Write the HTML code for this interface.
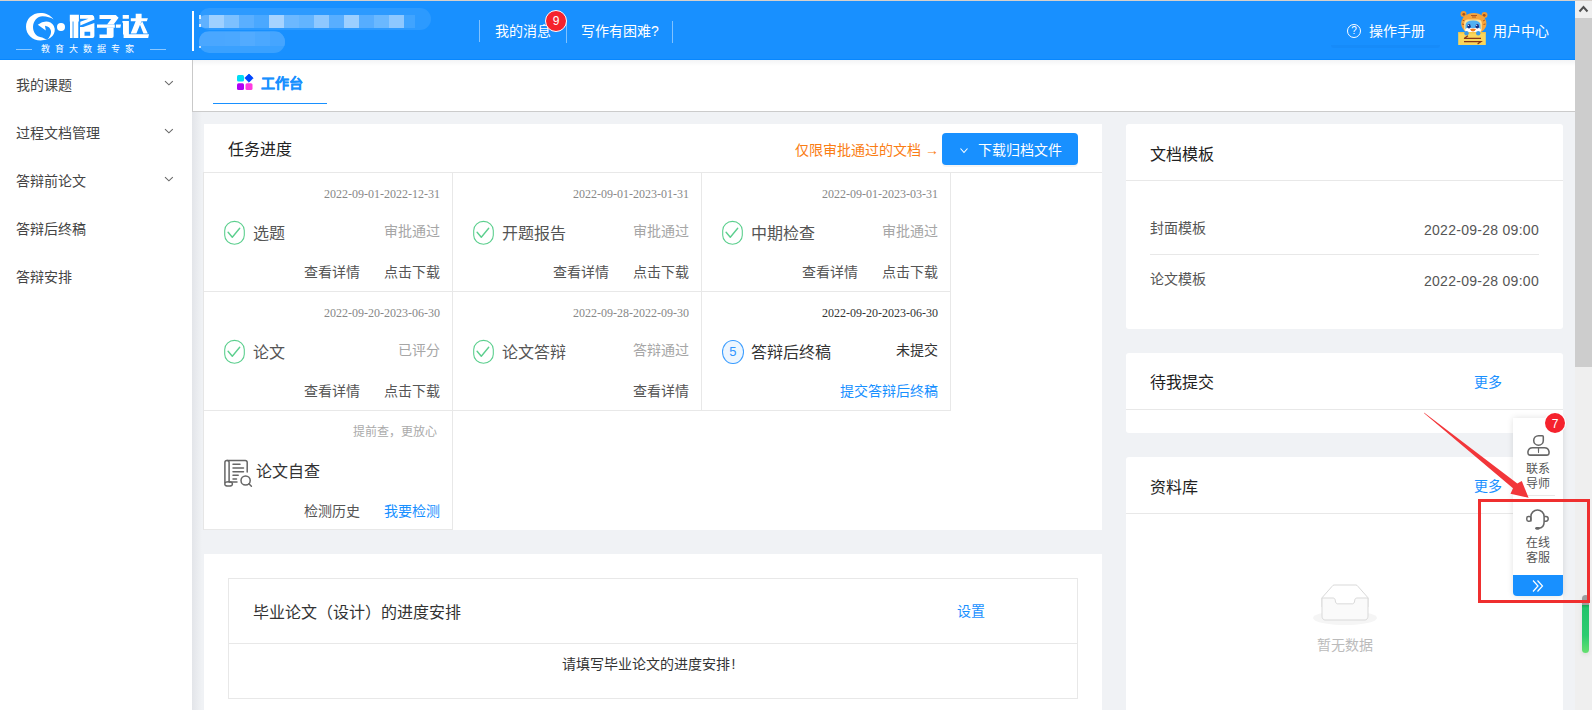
<!DOCTYPE html>
<html lang="zh-CN"><head><meta charset="utf-8">
<style>
*{box-sizing:border-box;margin:0;padding:0}
html,body{width:1592px;height:710px;overflow:hidden}
body{position:relative;background:#f0f2f5;font-family:"Liberation Sans",sans-serif;font-size:14px;color:#333}
.a{position:absolute;white-space:nowrap}
#topline{left:0;top:0;width:1592px;height:1px;background:#d6d0cb;z-index:5}
#hdr{left:0;top:1px;width:1575px;height:59px;background:#1890ff}
#hdrline{left:0;top:59px;width:1575px;height:1px;background:#0787ff}
.wt{color:#fff;font-size:14px;line-height:16px}
.sep{width:1px;height:22px;background:rgba(255,255,255,.45)}
#sb{left:1575px;top:0;width:17px;height:710px;background:#efefef}
#side{left:0;top:60px;width:192px;height:650px;background:#fff}
.mi{left:16px;font-size:14px;line-height:16px;color:#444}
.chev{left:165px;width:8px;height:5px}
#tabbar{left:192px;top:60px;width:1383px;height:52px;background:#fff;border-bottom:1px solid #cbcbcb;border-left:1px solid #c9c9c9}
.card{background:#fff}
.cell{width:249px;height:119px;border-right:1px solid #e8e8e8;border-bottom:1px solid #e8e8e8}
.date{font-family:"Liberation Serif",serif;font-size:12px;color:#888;line-height:14px;right:12px;top:14px}
.nm{font-size:16px;line-height:18px;color:#555;left:49px;top:52px}
.st{font-size:14px;line-height:16px;color:#a6a6a6;right:12px;top:51px}
.ln{font-size:14px;line-height:16px;color:#555;top:92px}
.blue{color:#1890ff}
</style></head><body>
<div class="a" id="topline"></div>
<div class="a" id="hdr"></div>
<div class="a" id="hdrline"></div>


<!-- header content -->
<svg class="a" style="left:20px;top:8px" width="50" height="37" viewBox="20 8 50 37">
 <path fill="#fff" d="M53.6 19.4 C50 14.8 45.5 13 40.5 13 C32 13 26 19.3 26 26.7 C26 34.5 32.5 40.4 40.5 40.4 C43 40.4 45.2 40.1 47.2 39.6 C44.5 38.6 42.6 37.4 41 37.2 C36.5 36.8 33 32.5 33 27 C33 21 37.5 16.3 42.5 16.3 C47 16.3 50.8 17.6 53.6 19.4 Z"/>
 <path fill="#fff" d="M37.8 24.7 Q44.5 19.8 50.5 22.5 Q55.5 25.5 54.6 31.5 Q53.5 37 47.2 39.6 Q51.5 35.5 51 31 Q50.3 26.8 45 25.7 L45.8 30.6 Z"/>
</svg>
<div class="a" style="left:57.3px;top:23.4px;width:7.8px;height:7.8px;border-radius:50%;background:#fff"></div>
<svg class="a" style="left:65px;top:8px" width="90" height="37" viewBox="65 8 90 37" fill="#fff">
 <path d="M69.8 14.8 H78.9 V21.6 H69.8 Z M70 21.6 H72.6 V38 H70 Z M73.5 21.6 H78.3 V38 H73.5 Z"/>
 <path d="M80 15 H92.5 Q94.4 15.5 94.4 18.5 V19.5 L80.3 25.5 V21.8 L88.5 18.7 H80 Z"/>
 <path d="M94.4 23 V27.2 H82.5 Z"/>
 <path d="M80 27.1 H94.4 V36 Q94.4 38 92.4 38 H80 Z M84.5 31.8 V35.8 H90.2 V31.8 Z" fill-rule="evenodd"/>
 <path d="M99.5 15.1 H115.8 L118.6 17.8 L113.6 24.4 H107 L111.3 19 H99.5 Z"/>
 <path d="M97 24.4 H114.8 V27.8 H97 Z M115.9 24.4 H121 L120.4 27.8 H115.9 Z"/>
 <path d="M106.8 27.8 H113.6 V36.2 Q113.6 38 111.8 38 H99.5 V34.6 H106.8 Z"/>
 <path d="M122.7 15.1 H128.9 V18.8 H122.7 Z M122.4 21 H128.9 V34.4 H123 V22.8 H122.4 Z M123.6 34.2 H149 L148.2 38 H123.6 Z"/>
 <path d="M135.7 13.8 H141.6 V18.2 H147.9 L146.8 21.2 H130.8 V18.2 H135.7 Z"/>
 <path d="M135.7 21 H141.6 L136.4 33.5 H130.7 Z M140 24.8 L142.2 21.2 L147.8 33.5 H143.4 Z"/>
</svg>
<div class="a" style="left:16px;top:49px;width:16px;height:1px;background:rgba(255,255,255,.5)"></div>
<div class="a" style="left:150px;top:49px;width:16px;height:1px;background:rgba(255,255,255,.5)"></div>
<div class="a" style="left:41px;top:44px;font-size:9px;line-height:10px;color:#fff;letter-spacing:5px">教育大数据专家</div>
<div class="a" style="left:192px;top:11px;width:2px;height:40px;background:#fff"></div>
<!-- blurred user text -->
<div class="a" style="left:197px;top:6px;width:236px;height:49px;filter:blur(0.7px)">
 <div class="a" style="left:2px;top:2px;width:232px;height:22px;border-radius:11px 12px 12px 11px;background:#2c9aff"></div>
 <div class="a" style="left:2px;top:9px;width:216px;height:13px;display:flex">
  <div style="width:10px;background:#5fb1ff;border-radius:6px 0 0 6px"></div>
  <div style="width:15px;background:#9ed0ff"></div><div style="width:15px;background:#7cc0ff"></div><div style="width:15px;background:#5aafff"></div><div style="width:15px;background:#4aa8ff"></div><div style="width:15px;background:#a6d3ff"></div><div style="width:15px;background:#6cb8ff"></div><div style="width:15px;background:#62b4ff"></div><div style="width:15px;background:#8ec8ff"></div><div style="width:15px;background:#58aeff"></div><div style="width:15px;background:#9ccfff"></div><div style="width:15px;background:#56adff"></div><div style="width:15px;background:#6ab8ff"></div><div style="width:15px;background:#8ec8ff"></div><div style="width:11px;background:#40a4ff"></div>
 </div>
 <div class="a" style="left:2px;top:25px;width:86px;height:22px;border-radius:11px 12px 12px 11px;background:#3aa1ff;overflow:hidden">
  <div class="a" style="left:0;top:1px;width:86px;height:14px;display:flex"><div style="width:26px;background:#4aa7ff"></div><div style="width:15px;background:#4ba8ff"></div><div style="width:15px;background:#52abff"></div><div style="width:15px;background:#4ba8ff"></div><div style="width:15px;background:#45a5ff"></div></div>
 </div>
</div>
<div class="a" style="left:199px;top:15px;width:2px;height:4px;background:#fff;opacity:.8"></div>
<div class="a" style="left:199px;top:24px;width:2px;height:3px;background:#fff;opacity:.8"></div>
<div class="a" style="left:199px;top:46px;width:2px;height:2px;background:#fff;opacity:.7"></div>
<div class="a sep" style="left:479px;top:20px"></div>
<div class="a sep" style="left:566px;top:21px"></div>
<div class="a sep" style="left:672px;top:21px"></div>
<div class="a wt" style="left:495px;top:23px">我的消息</div>
<div class="a" style="left:545px;top:10px;width:22px;height:22px;border-radius:50%;background:#f5222d;border:1px solid #fff;color:#fff;font-size:12px;line-height:20px;text-align:center">9</div>
<div class="a wt" style="left:581px;top:23px">写作有困难?</div>
<div class="a" style="left:1331px;top:45px;width:109px;height:3px;border-radius:0 0 6px 6px;background:rgba(0,60,140,.05)"></div>
<div class="a" style="left:1347px;top:24px;width:14px;height:14px;border-radius:50%;border:1px solid #fff;color:#fff;font-size:10px;line-height:12px;text-align:center">?</div>
<div class="a wt" style="left:1369px;top:23px">操作手册</div>
<!-- tiger avatar -->
<svg class="a" style="left:1452px;top:8px" width="40" height="40" viewBox="0 0 40 40">
 <circle cx="11.5" cy="6" r="3" fill="#f29a30"/><circle cx="11.8" cy="6.3" r="1.4" fill="#a3521c"/>
 <circle cx="32.5" cy="7" r="3" fill="#f29a30"/><circle cx="32.2" cy="7.3" r="1.4" fill="#a3521c"/>
 <ellipse cx="21.8" cy="15.5" rx="12.6" ry="10.5" fill="#f5a53c"/>
 <path d="M19 7.5 h6 M20 9 h4 M10.5 12 l2 1 M33 12 l-2 1 M10 16 l2 .5 M33.5 16 l-2 .5" stroke="#b3581d" stroke-width="1"/>
 <rect x="12.2" y="11.5" width="17.6" height="13" rx="4" fill="#ffe39a"/>
 <path d="M13.5 17 Q13.5 12.5 21 12.5 Q28.5 12.5 28.5 17 V21 H13.5 Z" fill="#52b0f2"/>
 <rect x="13.5" y="20" width="15" height="4" rx="1.5" fill="#fff"/>
 <ellipse cx="17" cy="18.3" rx="1.7" ry="2.2" fill="#1b2f80"/><ellipse cx="25.3" cy="18.3" rx="1.7" ry="2.2" fill="#1b2f80"/>
 <circle cx="16.4" cy="17.3" r=".6" fill="#fff"/><circle cx="24.7" cy="17.3" r=".6" fill="#fff"/>
 <path d="M18 21 Q21 20 24 21 Q23 23.5 21 23.5 Q19 23.5 18 21 Z" fill="#f47a1c"/>
 <rect x="6.2" y="24.2" width="27.6" height="12.8" fill="#fbd65a"/>
 <rect x="6.2" y="24.2" width="27.6" height="1.2" fill="#f3c445"/>
 <circle cx="14.5" cy="25.2" r="2.2" fill="#3d9be8"/><circle cx="26.2" cy="25.2" r="2.2" fill="#3d9be8"/>
 <path d="M12 30.4 H29 M12 30.4 L16 27.8 M12 33.6 H29 L25.6 36" stroke="#8a3616" stroke-width="1.2" fill="none"/>
</svg>
<div class="a wt" style="left:1493px;top:23px">用户中心</div>

<!-- sidebar -->
<div class="a" id="side"></div>
<div class="a mi" style="top:77px">我的课题</div>
<div class="a mi" style="top:125px">过程文档管理</div>
<div class="a mi" style="top:173px">答辩前论文</div>
<div class="a mi" style="top:221px">答辩后终稿</div>
<div class="a mi" style="top:269px">答辩安排</div>

<svg class="a" style="left:164px;top:80px" width="10" height="7" viewBox="0 0 10 7"><path d="M1 1.2 L4.9 4.9 L8.8 1.2" stroke="#666" stroke-width="1.05" fill="none"/></svg>
<svg class="a" style="left:164px;top:128px" width="10" height="7" viewBox="0 0 10 7"><path d="M1 1.2 L4.9 4.9 L8.8 1.2" stroke="#666" stroke-width="1.05" fill="none"/></svg>
<svg class="a" style="left:164px;top:176px" width="10" height="7" viewBox="0 0 10 7"><path d="M1 1.2 L4.9 4.9 L8.8 1.2" stroke="#666" stroke-width="1.05" fill="none"/></svg>
<!-- tab bar -->
<div class="a" id="tabbar"></div>
<div class="a" style="left:193px;top:60px;width:1382px;height:6px;background:linear-gradient(#f3f4f6,#fff)"></div>
<svg class="a" style="left:236px;top:73px" width="18" height="18" viewBox="0 0 18 18">
 <rect x="1" y="2" width="7" height="6.5" rx="1.5" fill="#00dcf5"/>
 <path d="M13 1 L17.2 5 L13 9.2 L8.8 5 Z" fill="#0047ff" stroke="#0047ff" stroke-width="0.8" stroke-linejoin="round"/>
 <rect x="1" y="10.2" width="7" height="6.8" rx="1.5" fill="#b000f5"/>
 <rect x="9.5" y="10.2" width="7" height="6.8" rx="1.5" fill="#ff3ae0"/>
</svg>
<div class="a" style="left:261px;top:75px;font-size:14px;line-height:16px;font-weight:bold;color:#1890ff;-webkit-text-stroke:0.25px #1890ff">工作台</div>
<div class="a" style="left:213px;top:103px;width:114px;height:1px;background:#1890ff"></div>
<div class="a" style="left:192px;top:112px;width:10px;height:598px;background:linear-gradient(90deg,#e3e5e9,#f0f2f5)"></div>


<!-- task card -->
<div class="a card" style="left:204px;top:124px;width:898px;height:406px"></div>
<div class="a" style="left:204px;top:172px;width:898px;height:1px;background:#e8e8e8"></div>
<div class="a" style="left:203px;top:172px;width:1px;height:358px;background:#e6e6e6"></div>
<div class="a" style="left:228px;top:141px;font-size:16px;line-height:18px;color:#222">任务进度</div>
<div class="a" style="left:795px;top:142px;font-size:14px;line-height:16px;color:#fa7d14">仅限审批通过的文档 →</div>
<div class="a" style="left:942px;top:133px;width:136px;height:32px;border-radius:4px;background:#1890ff;box-shadow:0 2px 0 rgba(0,0,0,.045)"></div>
<svg class="a" style="left:959px;top:147px" width="10" height="8" viewBox="0 0 10 8"><path d="M1.5 1.5 L5 5.5 L8.5 1.5" stroke="#fff" stroke-width="1.1" fill="none"/></svg>
<div class="a" style="left:978px;top:142px;font-size:14px;line-height:16px;color:#fff">下载归档文件</div>
<div class="a cell" style="left:204px;top:173px"></div><div class="a date" style="left:auto;right:1152px;top:187px;color:#888">2022-09-01-2022-12-31</div><svg class="a" style="left:223px;top:220px" width="24" height="26" viewBox="0 0 24 26"><rect x="1.7" y="1.4" width="19.6" height="22.9" rx="9.8" ry="9" fill="none" stroke="#5ccf8e" stroke-width="1.1"/><path d="M5.1 12.2 L9.3 17.2 L16.7 8.3" fill="none" stroke="#5ccf8e" stroke-width="1.4" stroke-linecap="round" stroke-linejoin="round"/></svg><div class="a nm" style="left:253px;top:225px;color:#555">选题</div><div class="a st" style="left:auto;right:1152px;top:223px;color:#a6a6a6">审批通过</div><div class="a ln" style="left:auto;right:1232px;top:264px;color:#555">查看详情</div><div class="a ln" style="left:auto;right:1152px;top:264px;color:#555">点击下载</div><div class="a cell" style="left:453px;top:173px"></div><div class="a date" style="left:auto;right:903px;top:187px;color:#888">2022-09-01-2023-01-31</div><svg class="a" style="left:472px;top:220px" width="24" height="26" viewBox="0 0 24 26"><rect x="1.7" y="1.4" width="19.6" height="22.9" rx="9.8" ry="9" fill="none" stroke="#5ccf8e" stroke-width="1.1"/><path d="M5.1 12.2 L9.3 17.2 L16.7 8.3" fill="none" stroke="#5ccf8e" stroke-width="1.4" stroke-linecap="round" stroke-linejoin="round"/></svg><div class="a nm" style="left:502px;top:225px;color:#555">开题报告</div><div class="a st" style="left:auto;right:903px;top:223px;color:#a6a6a6">审批通过</div><div class="a ln" style="left:auto;right:983px;top:264px;color:#555">查看详情</div><div class="a ln" style="left:auto;right:903px;top:264px;color:#555">点击下载</div><div class="a cell" style="left:702px;top:173px"></div><div class="a date" style="left:auto;right:654px;top:187px;color:#888">2022-09-01-2023-03-31</div><svg class="a" style="left:721px;top:220px" width="24" height="26" viewBox="0 0 24 26"><rect x="1.7" y="1.4" width="19.6" height="22.9" rx="9.8" ry="9" fill="none" stroke="#5ccf8e" stroke-width="1.1"/><path d="M5.1 12.2 L9.3 17.2 L16.7 8.3" fill="none" stroke="#5ccf8e" stroke-width="1.4" stroke-linecap="round" stroke-linejoin="round"/></svg><div class="a nm" style="left:751px;top:225px;color:#555">中期检查</div><div class="a st" style="left:auto;right:654px;top:223px;color:#a6a6a6">审批通过</div><div class="a ln" style="left:auto;right:734px;top:264px;color:#555">查看详情</div><div class="a ln" style="left:auto;right:654px;top:264px;color:#555">点击下载</div><div class="a cell" style="left:204px;top:292px"></div><div class="a date" style="left:auto;right:1152px;top:306px;color:#888">2022-09-20-2023-06-30</div><svg class="a" style="left:223px;top:339px" width="24" height="26" viewBox="0 0 24 26"><rect x="1.7" y="1.4" width="19.6" height="22.9" rx="9.8" ry="9" fill="none" stroke="#5ccf8e" stroke-width="1.1"/><path d="M5.1 12.2 L9.3 17.2 L16.7 8.3" fill="none" stroke="#5ccf8e" stroke-width="1.4" stroke-linecap="round" stroke-linejoin="round"/></svg><div class="a nm" style="left:253px;top:344px;color:#555">论文</div><div class="a st" style="left:auto;right:1152px;top:342px;color:#a6a6a6">已评分</div><div class="a ln" style="left:auto;right:1232px;top:383px;color:#555">查看详情</div><div class="a ln" style="left:auto;right:1152px;top:383px;color:#555">点击下载</div><div class="a cell" style="left:453px;top:292px"></div><div class="a date" style="left:auto;right:903px;top:306px;color:#888">2022-09-28-2022-09-30</div><svg class="a" style="left:472px;top:339px" width="24" height="26" viewBox="0 0 24 26"><rect x="1.7" y="1.4" width="19.6" height="22.9" rx="9.8" ry="9" fill="none" stroke="#5ccf8e" stroke-width="1.1"/><path d="M5.1 12.2 L9.3 17.2 L16.7 8.3" fill="none" stroke="#5ccf8e" stroke-width="1.4" stroke-linecap="round" stroke-linejoin="round"/></svg><div class="a nm" style="left:502px;top:344px;color:#555">论文答辩</div><div class="a st" style="left:auto;right:903px;top:342px;color:#a6a6a6">答辩通过</div><div class="a ln" style="left:auto;right:903px;top:383px;color:#555">查看详情</div><div class="a cell" style="left:702px;top:292px"></div><div class="a date" style="left:auto;right:654px;top:306px;color:#333">2022-09-20-2023-06-30</div><div class="a nm" style="left:751px;top:344px;color:#333">答辩后终稿</div><div class="a st" style="left:auto;right:654px;top:342px;color:#333">未提交</div><div class="a ln" style="left:auto;right:654px;top:383px;color:#1890ff">提交答辩后终稿</div><div class="a" style="left:722px;top:340px;width:21.5px;height:24px;border-radius:50%;border:1.1px solid #3a9cff;background:#edf6ff;color:#2f95ff;font-size:13px;line-height:22px;text-align:center">5</div><div class="a cell" style="left:204px;top:411px"></div><div class="a" style="right:1155px;top:425px;font-size:12px;line-height:14px;color:#aaa">提前查，更放心</div><svg class="a" style="left:218px;top:455px" width="40" height="37" viewBox="218 455 40 37">
 <g fill="none" stroke="#666" stroke-width="1.5" stroke-linecap="round">
 <path d="M224.9 482.5 V462.6 a2 2 0 0 1 2-2 h0.2 a2 2 0 0 1 2 2 V482"/>
 <path d="M227 460.6 H245.4 a1.8 1.8 0 0 1 1.8 1.8 V472"/>
 <ellipse cx="228.6" cy="483.9" rx="3.8" ry="2.2"/>
 <path d="M229.5 482 H237"/>
 <path d="M233 464.3 H240 M233 468 H243.5 M233 471.7 H243.5 M233 475.2 H238.2 M233 479 H236.5"/>
 <circle cx="245.6" cy="480.5" r="4.6"/>
 <path d="M248.9 483.8 L251.4 486.2"/>
 </g>
</svg><div class="a" style="left:256px;top:463px;font-size:16px;line-height:18px;color:#333">论文自查</div><div class="a ln" style="right:1232px;top:503px">检测历史</div><div class="a ln" style="right:1152px;top:503px;color:#1890ff">我要检测</div>


<!-- bottom card -->
<div class="a card" style="left:204px;top:554px;width:898px;height:160px"></div>
<div class="a" style="left:228px;top:578px;width:850px;height:121px;border:1px solid #e8e8e8"></div>
<div class="a" style="left:229px;top:643px;width:848px;height:1px;background:#e8e8e8"></div>
<div class="a" style="left:253px;top:604px;font-size:16px;line-height:18px;color:#333">毕业论文（设计）的进度安排</div>
<div class="a" style="left:957px;top:603px;font-size:14px;line-height:16px;color:#1890ff">设置</div>
<div class="a" style="left:562px;top:656px;font-size:14px;line-height:16px;color:#333">请填写毕业论文的进度安排<span style="margin-left:1.5px">!</span></div>

<!-- right column -->
<div class="a card" style="left:1126px;top:124px;width:437px;height:205px;border-radius:3px"></div>
<div class="a" style="left:1126px;top:180px;width:437px;height:1px;background:#e8e8e8"></div>
<div class="a" style="left:1150px;top:146px;font-size:16px;line-height:18px;color:#222">文档模板</div>
<div class="a" style="left:1150px;top:220px;font-size:14px;line-height:16px;color:#555">封面模板</div>
<div class="a" style="right:53px;top:222px;font-size:14px;line-height:16px;color:#555;letter-spacing:0.28px">2022-09-28 09:00</div>
<div class="a" style="left:1150px;top:254px;width:389px;height:1px;background:#e8e8e8"></div>
<div class="a" style="left:1150px;top:271px;font-size:14px;line-height:16px;color:#555">论文模板</div>
<div class="a" style="right:53px;top:273px;font-size:14px;line-height:16px;color:#555;letter-spacing:0.28px">2022-09-28 09:00</div>

<div class="a card" style="left:1126px;top:353px;width:437px;height:80px;border-radius:3px"></div>
<div class="a" style="left:1126px;top:409px;width:437px;height:1px;background:#e8e8e8"></div>
<div class="a" style="left:1150px;top:374px;font-size:16px;line-height:18px;color:#222">待我提交</div>
<div class="a" style="left:1474px;top:374px;font-size:14px;line-height:16px;color:#1890ff">更多</div>

<div class="a card" style="left:1126px;top:457px;width:437px;height:260px;border-radius:3px"></div>
<div class="a" style="left:1126px;top:513px;width:437px;height:1px;background:#e8e8e8"></div>
<div class="a" style="left:1150px;top:479px;font-size:16px;line-height:18px;color:#222">资料库</div>
<div class="a" style="left:1474px;top:478px;font-size:14px;line-height:16px;color:#1890ff">更多</div>
<svg class="a" style="left:1313px;top:584px" width="64" height="41" viewBox="0 0 64 41"><g transform="translate(0 1)" fill="none" fill-rule="evenodd"><ellipse fill="#F5F5F5" cx="32" cy="33" rx="32" ry="7"/><g fill-rule="nonzero" stroke="#D9D9D9"><path d="M55 12.76L44.854 1.258C44.367.474 43.656 0 42.907 0H21.093c-.749 0-1.46.474-1.947 1.257L9 12.761V22h46v-9.24z"/><path d="M41.613 15.931c0-1.605.994-2.93 2.227-2.931H55v18.137C55 33.26 53.68 35 52.05 35h-40.1C10.32 35 9 33.259 9 31.137V13h11.16c1.233 0 2.227 1.323 2.227 2.928v.022c0 1.605 1.005 2.901 2.237 2.901h14.752c1.232 0 2.237-1.308 2.237-2.913v-.007z" fill="#FAFAFA"/></g></g></svg>
<div class="a" style="left:1317px;top:637px;font-size:14px;line-height:16px;color:#bbb">暂无数据</div>

<!-- floating widget -->
<div class="a" style="left:1513px;top:418px;width:50px;height:178px;background:#fff;border-radius:0 0 4px 4px;box-shadow:0 0 6px rgba(0,0,0,.12)"></div>
<div class="a" style="left:1545px;top:413px;width:20px;height:20px;border-radius:50%;background:#f5222d;color:#fff;font-size:12px;line-height:22px;text-align:center;box-shadow:0 0 0 1px #fff">7</div>
<svg class="a" style="left:1518px;top:425px" width="40" height="35" viewBox="1518 425 40 35">
 <path d="M1533.7 440.4 A4.8 4.8 0 0 1 1538.5 435.7 H1542.3 Q1543.3 435.7 1543.3 436.7 V440.4 A4.8 4.8 0 0 1 1533.7 440.4 Z" fill="none" stroke="#666" stroke-width="1.55"/>
 <path d="M1532.5 447.7 H1544.5 Q1548.2 447.7 1549 451.5 Q1549.6 455.1 1546.5 455.1 H1530.5 Q1527.4 455.1 1528 451.5 Q1528.8 447.7 1532.5 447.7 Z" fill="none" stroke="#666" stroke-width="1.55"/>
 <path d="M1537.8 448 H1539.2 L1539 452.3 L1538.5 453.3 L1538 452.3 Z" fill="#666"/>
</svg>
<div class="a" style="left:1526px;top:462px;font-size:12px;line-height:15px;color:#555;white-space:normal;width:26px">联系 导师</div>
<div class="a" style="left:1526px;top:495px;width:29px;height:1px;background:#e8e8e8"></div>
<svg class="a" style="left:1518px;top:500px" width="40" height="35" viewBox="1518 500 40 35">
 <path d="M1530.9 521.5 V516.5 A6.6 6.6 0 0 1 1544.1 516.5 V522 Q1544.1 528 1538.5 528.2" fill="none" stroke="#666" stroke-width="1.55"/>
 <rect x="1526.8" y="516.4" width="4.1" height="4.8" rx="1.6" fill="none" stroke="#666" stroke-width="1.45"/>
 <path d="M1544.1 516.4 H1546 Q1548.2 516.4 1548.2 518.8 Q1548.2 521.2 1546 521.2 H1544.1" fill="none" stroke="#666" stroke-width="1.45"/>
 <rect x="1535.2" y="526.9" width="4.6" height="2.8" rx="1.4" fill="#666"/>
</svg>
<div class="a" style="left:1526px;top:536px;font-size:12px;line-height:15px;color:#555;white-space:normal;width:26px">在线 客服</div>
<div class="a" style="left:1513px;top:575px;width:50px;height:21px;background:#1890ff;border-radius:0 0 4px 4px"></div>
<svg class="a" style="left:1531px;top:579px" width="14" height="14" viewBox="0 0 14 14"><path d="M2 1.5 L7 7 L2 12.5 M6.5 1.5 L11.5 7 L6.5 12.5" stroke="#fff" stroke-width="1.2" fill="none"/></svg>

<!-- scrollbar -->
<div class="a" id="sb"></div>
<div class="a" style="left:1575px;top:18px;width:17px;height:349px;background:#cdcdcd"></div>
<svg class="a" style="left:1578px;top:4px" width="11" height="9" viewBox="0 0 11 9"><path d="M1.5 7.5 L5.5 3 L9.5 7.5" stroke="#505050" stroke-width="2" fill="none"/></svg>
<div class="a" style="left:1582px;top:595px;width:7px;height:58px;border-radius:4px;background:linear-gradient(#9d9d9d 0,#9d9d9d 10.5px,#1aa85a 10.5px,#22c46c 13px,#2ccc70 70%,#66e070 100%);box-shadow:0 2px 4px rgba(0,0,0,.08)"></div>

<!-- annotation -->
<div class="a" style="left:1478px;top:499px;width:112px;height:104px;border:3px solid #ef2f2f"></div>
<svg class="a" style="left:1420px;top:408px" width="115" height="95" viewBox="1420 408 115 95">
 <path d="M1424 412.6 L1424.4 413.4 L1513 488.3 L1510.5 493.8 L1528.6 497.8 L1521.8 481 L1517.3 483.4 Z" fill="#f2363a"/>
</svg>

</body></html>
